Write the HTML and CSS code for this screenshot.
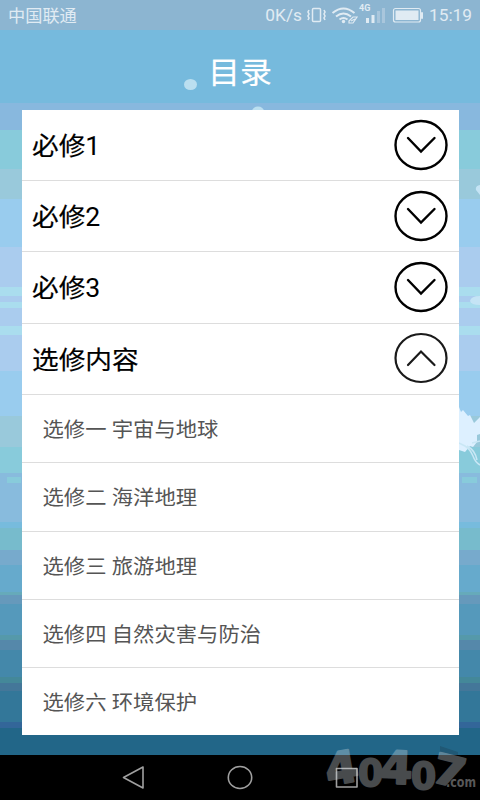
FILE: index.html
```html
<!DOCTYPE html>
<html lang="zh-CN">
<head>
<meta charset="utf-8">
<title>目录</title>
<link rel="stylesheet" href="styles.css">
</head>
<body>
<svg class="scenery" width="480" height="800" viewBox="0 0 480 800" aria-hidden="true">
  <g fill="#88cbdb"><path d="M7 477h14v6H7zM462 477h15v6h-15z"/></g>
  <ellipse cx="190.500" cy="84.500" rx="6.500" ry="5.500" fill="#bbdff0"/>
  <ellipse cx="258" cy="111.500" rx="6" ry="5" fill="#bbdff0"/>
  <path d="M480 185q-5 1-4 5l4 5zM480 296q-9 0-10 5 1 4 10 4z" fill="#c5e4f5"/>
  <path d="M459 407l2 5 2-2 5 6 2-1 4 8 6-6v17l-3 1v7l-4 5-3-1-5 6-6-2z" fill="#ddf0ff"/>
  <path d="M459 443l6 3q5 3 8 10 2 6 7 9M467 446q8 4 10 14M472 443l8-2" fill="none" stroke="#c9e7f5" stroke-width="1.500"/>
  <path d="M440 746l18 6v3h-18z" fill="#205875"/>
</svg>
<header class="status">
  <span class="carrier">中国联通</span>
  <span class="speed">0K/s</span>
  <svg class="indicators" width="118" height="30" viewBox="0 0 118 30" aria-hidden="true">
    <g fill="none" stroke="#e0ebf3" stroke-width="1.500">
      <rect x="7.500" y="8.500" width="8" height="13" rx="1"/>
      <path d="M4 10l-1 2 1 2-1 2 1 2-1 2M19 10l1 2-1 2 1 2-1 2 1 2" stroke-width="1.600"/>
      <path d="M27.500 13q11-9 22 0M31 16.500q7.500-6 15 0M34.500 19.500q4-3 8 0" stroke-width="2"/>
      <path d="M44 21l4-4h4l-4 6h-4zM46 21l4-2" stroke-width="1.200"/>
      <rect x="88.500" y="8.500" width="27" height="13.500" rx="2" stroke-width="1.200"/>
    </g>
    <g fill="#e0ebf3">
      <circle cx="38.500" cy="21.500" r="1.700"/>
      <rect x="61" y="18" width="3" height="5"/><rect x="66.500" y="15" width="3" height="8"/>
      <rect x="90.500" y="10.500" width="23" height="9.500"/><rect x="116" y="12" width="2" height="7" rx="1"/>
    </g>
    <g fill="#a9c6dc"><rect x="72" y="11" width="3" height="12"/><rect x="77" y="8" width="3" height="15"/></g>
    <text class="network" x="54" y="11">4G</text>
  </svg>
  <span class="clock">15:19</span>
</header>
<h1 class="title"><span>目录</span></h1>
<main class="catalog">
  <section class="group"><h2>必修<b>1</b></h2>
    <svg class="toggle" viewBox="0 0 54 52"><ellipse cx="27" cy="26" rx="25.500" ry="24"/><path d="M14 19l13 13.500L40.500 19"/></svg></section>
  <section class="group"><h2>必修<b>2</b></h2>
    <svg class="toggle" viewBox="0 0 54 52"><ellipse cx="27" cy="26" rx="25.500" ry="24"/><path d="M14 19l13 13.500L40.500 19"/></svg></section>
  <section class="group"><h2>必修<b>3</b></h2>
    <svg class="toggle" viewBox="0 0 54 52"><ellipse cx="27" cy="26" rx="25.500" ry="24"/><path d="M14 19l13 13.500L40.500 19"/></svg></section>
  <section class="group"><h2>选修内容</h2>
    <svg class="toggle open" viewBox="0 0 54 52"><ellipse cx="27" cy="26" rx="25.500" ry="24"/><path d="M14 33l13-13.500L40.500 33"/></svg></section>
  <ul class="lessons">
    <li><span>选修一 宇宙与地球</span></li>
    <li><span>选修二 海洋地理</span></li>
    <li><span>选修三 旅游地理</span></li>
    <li><span>选修四 自然灾害与防治</span></li>
    <li><span>选修六 环境保护</span></li>
  </ul>
</main>
<nav class="navbar">
  <svg width="236" height="45" viewBox="0 0 236 45" fill="none" stroke="#a0a0a0" stroke-width="1.600" stroke-linejoin="round">
    <path d="M1.500 22.500L21 12v21z"/><ellipse cx="118" cy="22.500" rx="11.700" ry="11"/><rect x="214.500" y="13.500" width="20.500" height="18.500"/>
  </svg>
</nav>
<svg class="watermark" width="160" height="60" viewBox="0 0 160 60">
  <g class="digits">
    <text transform="translate(8 46) rotate(-10) scale(1.150 1.080)">4</text>
    <text class="round" transform="translate(38 46) scale(.950 1)">0</text>
    <text transform="translate(60 43) rotate(2) scale(1.120 1.100)">4</text>
    <text class="round" transform="translate(91 49) scale(.950 1)">0</text>
    <text transform="translate(110 41) rotate(14) scale(1.150 1)">7</text>
  </g>
  <text class="domain" x="126" y="47" textLength="30" lengthAdjust="spacingAndGlyphs">.com</text>
</svg>
</body>
</html>
```
FILE: styles.css
```css
* { box-sizing: border-box; }
body {
  margin: 0;
  width: 480px;
  height: 800px;
  overflow: hidden;
  position: relative;
  display: flex;
  flex-direction: column;
  font-family: Roboto, "Noto Sans CJK SC", sans-serif;
  background: linear-gradient(
    #76badd 0 103px, #88b8de 103px 130px, #88cbdb 130px 169px, #99c9db 169px 199px,
    #99ccee 199px 247px, #aaccee 247px 287px, #aaddee 287px 296px, #aaccee 296px 302px,
    #aaddee 302px 308px, #aaccee 308px 326px, #aaddee 326px 335px, #aaccee 335px 371px,
    #99ccee 371px 416px, #99c9db 416px 447px, #88cbdb 447px 473px, #88bbdd 473px 522px,
    #77bbdd 522px 528px, #77bbcc 528px 550px, #77aacc 550px 565px, #66aacc 565px 592px,
    #66aaba 592px 595px, #6699bb 595px 604px, #5599bb 604px 635px, #5599aa 635px 640px,
    #5588aa 640px 650px, #4488aa 650px 677px, #448899 677px 683px, #447799 683px 691px,
    #337799 691px 722px, #336699 722px 728px, #226688 728px);
}
.scenery { position: absolute; inset: 0; z-index: -1; }
.status {
  height: 30px;
  flex: none;
  display: flex;
  align-items: center;
  padding: 0 8px;
  background: #8cb5d1;
  color: #e0ebf3;
  font-size: 17.300px;
  line-height: 32px;
}
.carrier { font-size: 17.200px; padding-top: 1px; transform: scaleY(.96); }
.speed { margin-left: auto; font-size: 17.300px; }
.indicators { flex: none; margin-left: 3px; }
.network { font: bold 9px Roboto, sans-serif; fill: #e0ebf3; }
.clock { margin-left: 6px; }
.title {
  margin: 0;
  height: 80px;
  flex: none;
  text-align: center;
  color: #fff;
  font-size: 32px;
  font-weight: 400;
  line-height: 86px;
  -webkit-text-stroke: .2px #fff;
}
.title span { display: inline-block; transform: scaleY(.94); }
.catalog { width: 437px; height: 625px; margin: 0 21px 0 22px; flex: none; background: #fff; }
.group {
  height: 71.200px;
  display: flex;
  align-items: center;
  justify-content: space-between;
  padding: 0 11px 1px 10px;
  border-bottom: 1.500px solid #ddd;
}
.group h2 {
  margin: 0;
  font-size: 26.670px;
  font-weight: 400;
  color: #000;
  transform: scaleY(.9375);
  -webkit-text-stroke: .2px #000;
}
.group b { font-weight: 400; -webkit-text-stroke: 0; }
.toggle { width: 54px; height: 52px; fill: none; stroke: #000; stroke-width: 2.400; stroke-linecap: round; }
.open { stroke: #1a1a1a; stroke-width: 2.200; }
.lessons { list-style: none; margin: 0; padding: 0; }
.lessons li {
  height: 68.400px;
  padding-left: 20.500px;
  border-bottom: 1.500px solid #ddd;
  display: flex;
  align-items: center;
  font-size: 21.330px;
  color: #555;
}
.lessons li:last-child { height: 67px; border: 0; }
.lessons span { transform: scaleY(.9375); }
.navbar { margin-top: auto; height: 45px; flex: none; background: #000; display: flex; justify-content: center; }
.navbar svg { margin-left: -1px; }
.watermark { position: absolute; left: 320px; top: 740px; }
.digits { opacity: .34; }
.watermark text {
  font-family: "DejaVu Sans", sans-serif;
  font-weight: 700;
  font-size: 41px;
  fill: #d2dce2;
  stroke: #d2dce2;
  stroke-width: 2px;
  stroke-linejoin: round;
}
.watermark .round { font-size: 38px; }
.watermark .domain { font-size: 14px; fill: #585858; stroke: none; }
```
